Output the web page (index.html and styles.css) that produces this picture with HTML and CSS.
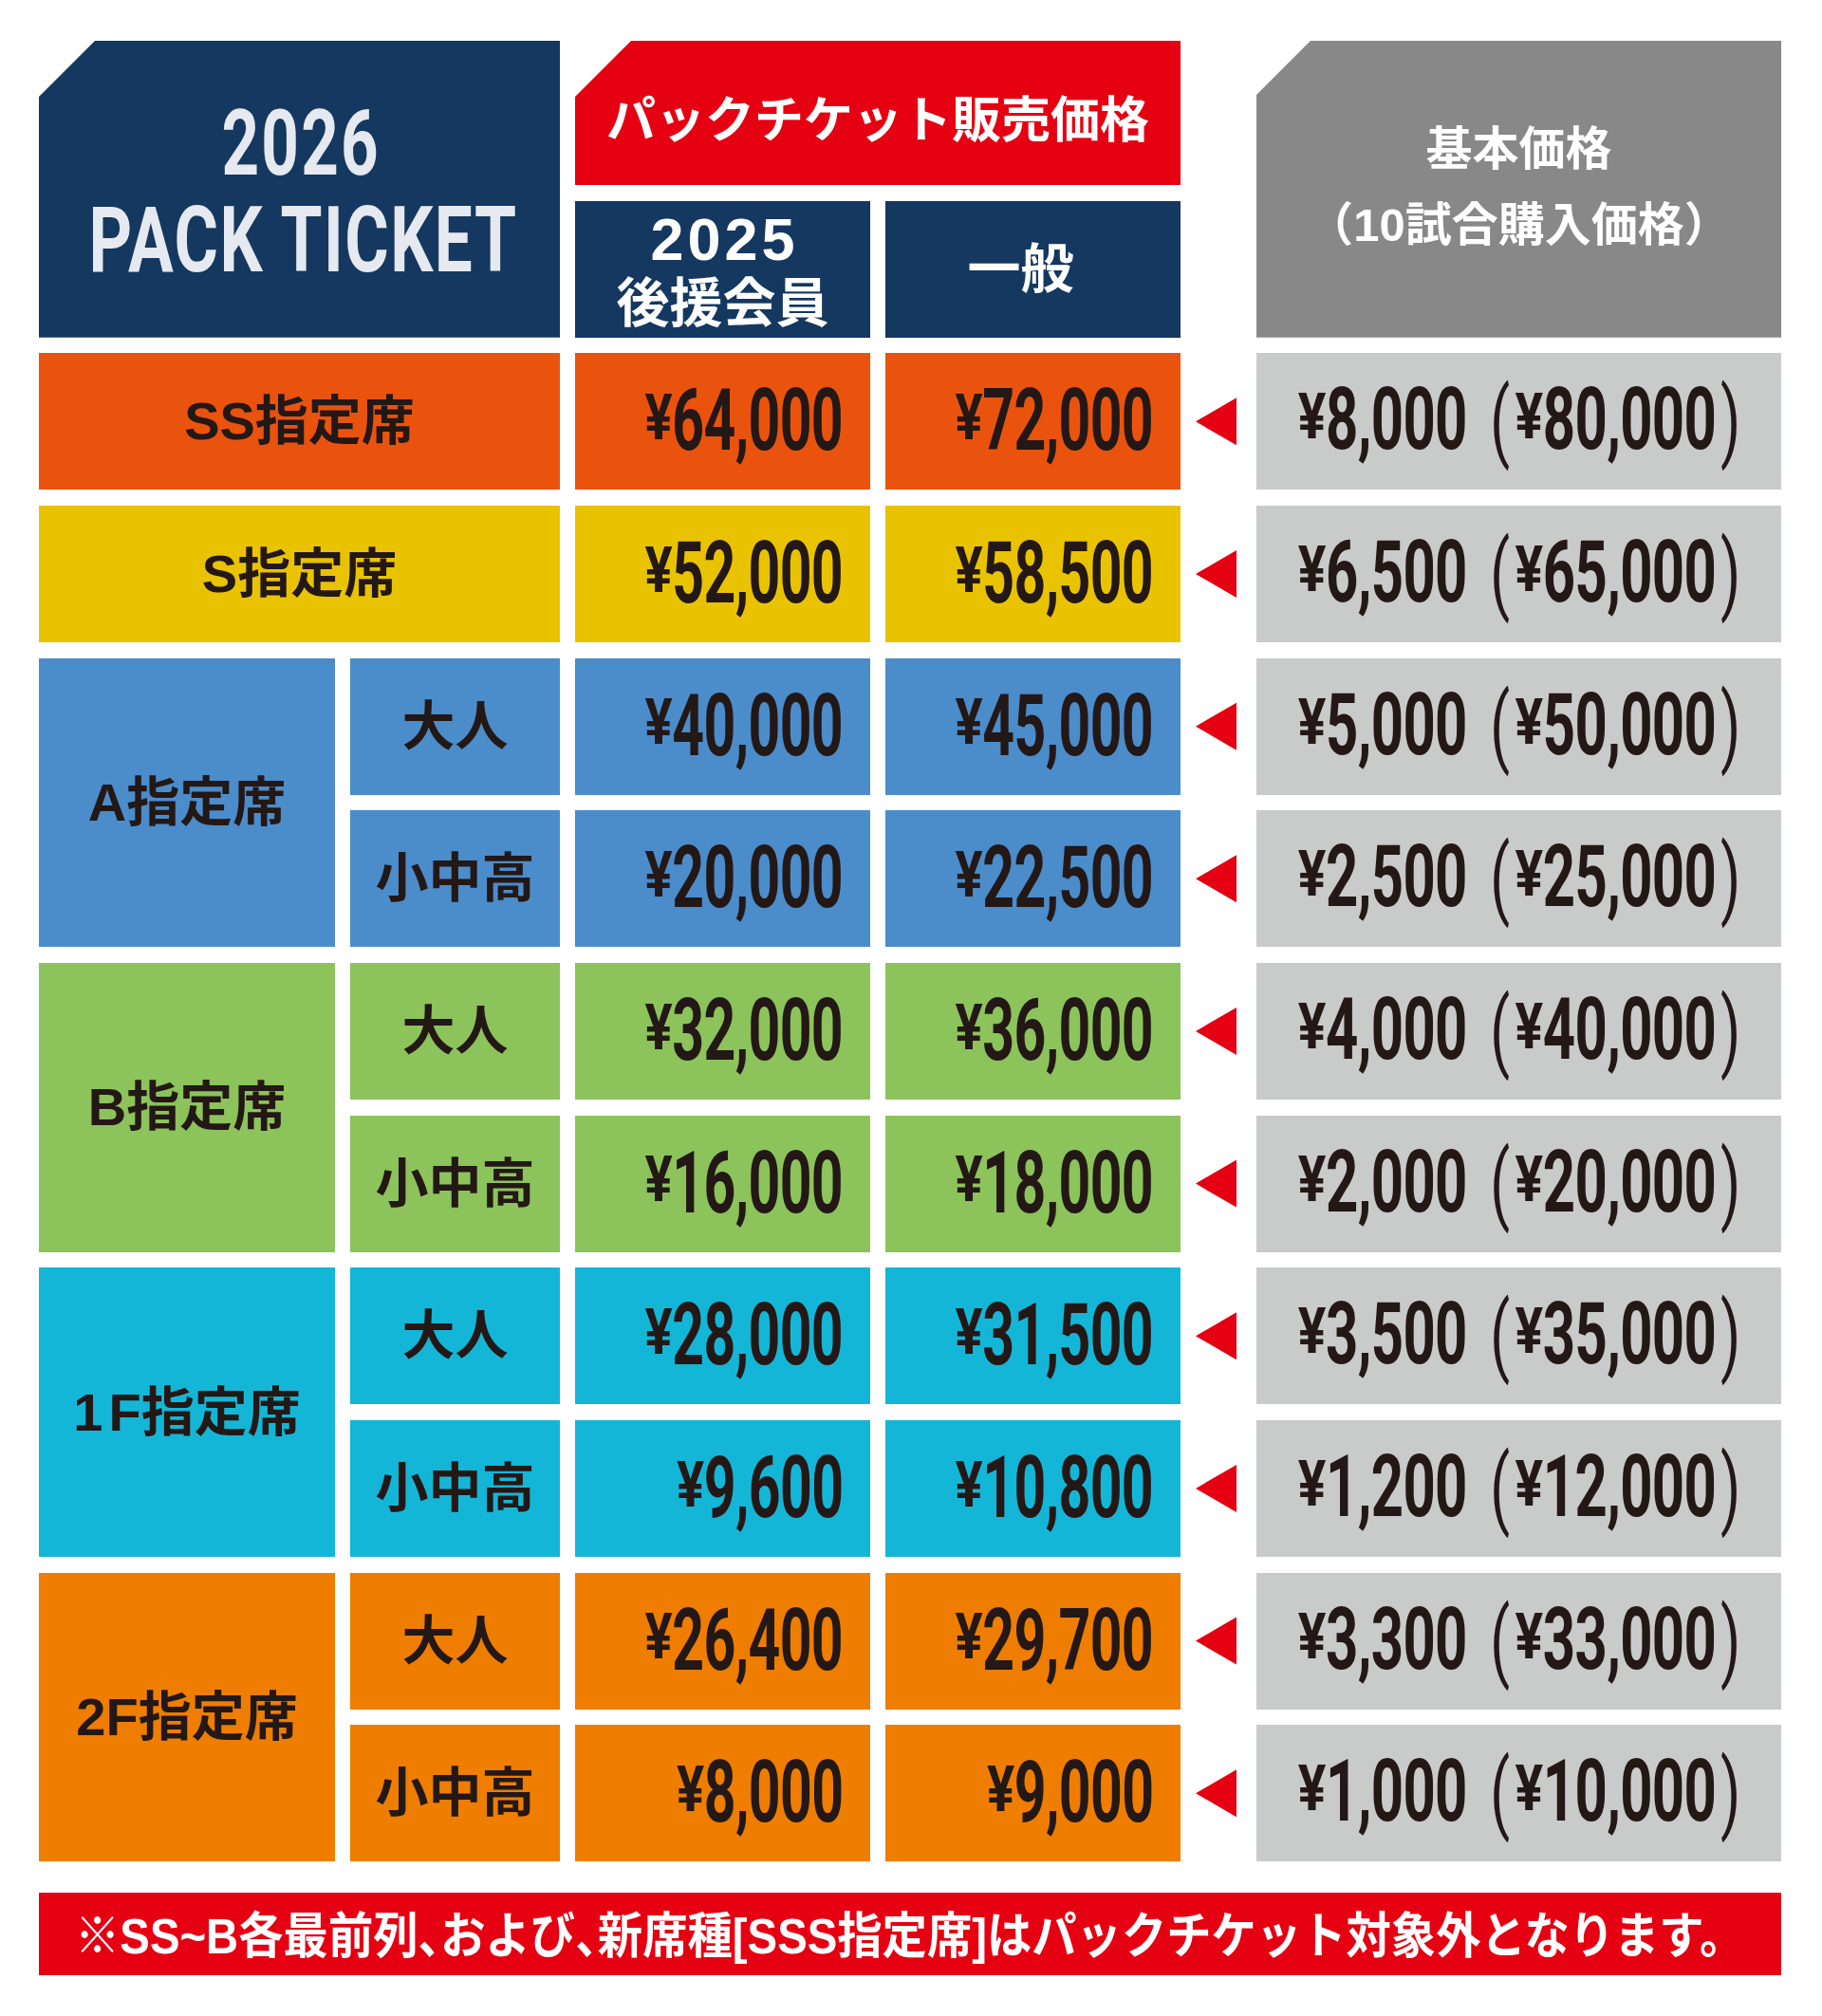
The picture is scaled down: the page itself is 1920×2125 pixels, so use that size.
FILE: index.html
```html
<!DOCTYPE html>
<html lang="ja">
<head>
<meta charset="utf-8">
<title>2026 PACK TICKET</title>
<link rel="stylesheet" href="styles.css">
</head>
<body>
<div class="page">
  <div class="table">
    <div class="cell title">
      <div class="title-year">2026</div>
      <div class="title-main">PACK TICKET</div>
    </div>
    <div class="cell pack-head">パックチケット販売価格</div>
    <div class="spacer"></div>
    <div class="cell base-head">
      <div>基本価格</div>
      <div>（10試合購入価格）</div>
    </div>
    <div class="cell sub-head">
      <div class="sub-year">2025</div>
      <div class="sub-label">後援会員</div>
    </div>
    <div class="cell sub-head"><div class="sub-label general">一般</div></div>
    <div class="spacer"></div>

    <!-- SS -->
    <div class="cell label wide ss">SS指定席</div>
    <div class="cell price ss"><span class="num"><span class="yen">¥</span>64,000</span></div>
    <div class="cell price ss"><span class="num"><span class="yen">¥</span>72,000</span></div>
    <div class="arrow"><span class="tri"></span></div>
    <div class="cell base"><span class="num"><span class="yen">¥</span>8,000<span class="paren open">(</span><span class="yen">¥</span>80,000<span class="paren close">)</span></span></div>

    <!-- S -->
    <div class="cell label wide s">S指定席</div>
    <div class="cell price s"><span class="num"><span class="yen">¥</span>52,000</span></div>
    <div class="cell price s"><span class="num"><span class="yen">¥</span>58,500</span></div>
    <div class="arrow"><span class="tri"></span></div>
    <div class="cell base"><span class="num"><span class="yen">¥</span>6,500<span class="paren open">(</span><span class="yen">¥</span>65,000<span class="paren close">)</span></span></div>

    <!-- A -->
    <div class="cell label tall a">A指定席</div>
    <div class="cell label a">大人</div>
    <div class="cell price a"><span class="num"><span class="yen">¥</span>40,000</span></div>
    <div class="cell price a"><span class="num"><span class="yen">¥</span>45,000</span></div>
    <div class="arrow"><span class="tri"></span></div>
    <div class="cell base"><span class="num"><span class="yen">¥</span>5,000<span class="paren open">(</span><span class="yen">¥</span>50,000<span class="paren close">)</span></span></div>
    <div class="cell label a">小中高</div>
    <div class="cell price a"><span class="num"><span class="yen">¥</span>20,000</span></div>
    <div class="cell price a"><span class="num"><span class="yen">¥</span>22,500</span></div>
    <div class="arrow"><span class="tri"></span></div>
    <div class="cell base"><span class="num"><span class="yen">¥</span>2,500<span class="paren open">(</span><span class="yen">¥</span>25,000<span class="paren close">)</span></span></div>

    <!-- B -->
    <div class="cell label tall b">B指定席</div>
    <div class="cell label b">大人</div>
    <div class="cell price b"><span class="num"><span class="yen">¥</span>32,000</span></div>
    <div class="cell price b"><span class="num"><span class="yen">¥</span>36,000</span></div>
    <div class="arrow"><span class="tri"></span></div>
    <div class="cell base"><span class="num"><span class="yen">¥</span>4,000<span class="paren open">(</span><span class="yen">¥</span>40,000<span class="paren close">)</span></span></div>
    <div class="cell label b">小中高</div>
    <div class="cell price b"><span class="num"><span class="yen">¥</span>16,000</span></div>
    <div class="cell price b"><span class="num"><span class="yen">¥</span>18,000</span></div>
    <div class="arrow"><span class="tri"></span></div>
    <div class="cell base"><span class="num"><span class="yen">¥</span>2,000<span class="paren open">(</span><span class="yen">¥</span>20,000<span class="paren close">)</span></span></div>

    <!-- 1F -->
    <div class="cell label tall f1"><span class="floor">1</span>F指定席</div>
    <div class="cell label f1">大人</div>
    <div class="cell price f1"><span class="num"><span class="yen">¥</span>28,000</span></div>
    <div class="cell price f1"><span class="num"><span class="yen">¥</span>31,500</span></div>
    <div class="arrow"><span class="tri"></span></div>
    <div class="cell base"><span class="num"><span class="yen">¥</span>3,500<span class="paren open">(</span><span class="yen">¥</span>35,000<span class="paren close">)</span></span></div>
    <div class="cell label f1">小中高</div>
    <div class="cell price f1"><span class="num"><span class="yen">¥</span>9,600</span></div>
    <div class="cell price f1"><span class="num"><span class="yen">¥</span>10,800</span></div>
    <div class="arrow"><span class="tri"></span></div>
    <div class="cell base"><span class="num"><span class="yen">¥</span>1,200<span class="paren open">(</span><span class="yen">¥</span>12,000<span class="paren close">)</span></span></div>

    <!-- 2F -->
    <div class="cell label tall f2">2F指定席</div>
    <div class="cell label f2">大人</div>
    <div class="cell price f2"><span class="num"><span class="yen">¥</span>26,400</span></div>
    <div class="cell price f2"><span class="num"><span class="yen">¥</span>29,700</span></div>
    <div class="arrow"><span class="tri"></span></div>
    <div class="cell base"><span class="num"><span class="yen">¥</span>3,300<span class="paren open">(</span><span class="yen">¥</span>33,000<span class="paren close">)</span></span></div>
    <div class="cell label f2">小中高</div>
    <div class="cell price f2"><span class="num"><span class="yen">¥</span>8,000</span></div>
    <div class="cell price f2"><span class="num"><span class="yen">¥</span>9,000</span></div>
    <div class="arrow"><span class="tri"></span></div>
    <div class="cell base"><span class="num"><span class="yen">¥</span>1,000<span class="paren open">(</span><span class="yen">¥</span>10,000<span class="paren close">)</span></span></div>
  </div>

  <div class="note"><span class="note-text">※SS~B各最前列<span class="punct">、</span>および<span class="punct">、</span>新席種[SSS指定席]はパックチケット対象外となります。</span></div>
</div>
</body>
</html>
```

FILE: styles.css
```css
html, body {
  margin: 0;
  padding: 0;
  background: #ffffff;
}

body {
  font-family: "Liberation Sans", "Noto Sans CJK JP", sans-serif;
  color: #231815;
}

.page {
  width: 1836px;
  padding: 43px 0 0 41px;
}

.table {
  display: grid;
  grid-template-columns: 312px 221px 311px 311px 48px 553px;
  grid-template-rows: 152px repeat(11, 144px);
  column-gap: 16px;
  row-gap: 16.67px;
}

.cell {
  display: flex;
  align-items: center;
  justify-content: center;
  overflow: hidden;
}

/* ---------- headers ---------- */
.title {
  grid-column: span 2;
  grid-row: span 2;
  flex-direction: column;
  background: #143860;
  color: #e6e9ef;
  font-family: "Roboto", "Liberation Sans", sans-serif;
  font-weight: 700;
  font-size: 96px;
  line-height: 102px;
  clip-path: polygon(59px 0, 100% 0, 100% 100%, 0 100%, 0 59px);
  padding-top: 6px;
  box-sizing: border-box;
}

.title-year {
  transform: scaleX(0.72);
  letter-spacing: 3px;
  margin-left: 4px;
}

.title-main {
  transform: scaleX(0.74);
  white-space: nowrap;
  letter-spacing: 2px;
  margin-left: 8px;
}

.pack-head {
  grid-column: span 2;
  background: #e50012;
  color: #ffffff;
  font-family: "Noto Sans CJK JP", sans-serif;
  font-weight: 700;
  font-size: 52px;
  line-height: 1;
  padding-top: 8px;
  box-sizing: border-box;
  clip-path: polygon(59px 0, 100% 0, 100% 100%, 0 100%, 0 59px);
  white-space: nowrap;
}

.base-head {
  grid-row: span 2;
  flex-direction: column;
  background: #888889;
  color: #ffffff;
  font-family: "Liberation Sans", "Noto Sans CJK JP", sans-serif;
  font-weight: 700;
  font-size: 49px;
  line-height: 80px;
  clip-path: polygon(57px 0, 100% 0, 100% 100%, 0 100%, 0 57px);
  padding-bottom: 4px;
  box-sizing: border-box;
  white-space: nowrap;
}

.sub-head {
  flex-direction: column;
  background: #143860;
  color: #ffffff;
  font-weight: 700;
  font-family: "Liberation Sans", "Noto Sans CJK JP", sans-serif;
}

.sub-year {
  font-size: 63px;
  line-height: 72px;
  letter-spacing: 4px;
  margin-left: 4px;
}

.sub-label {
  font-size: 56px;
  line-height: 64px;
}

.sub-label.general {
  margin-right: 26px;
}

.spacer {
  background: transparent;
}

/* ---------- body rows ---------- */
.label {
  font-family: "Liberation Sans", "Noto Sans CJK JP", sans-serif;
  font-weight: 700;
  font-size: 56px;
  line-height: 1;
  white-space: nowrap;
  color: #231815;
}

.label.wide {
  grid-column: span 2;
}

.label.tall {
  grid-row: span 2;
}

.floor {
  margin-right: 6px;
}

.price {
  justify-content: flex-end;
  padding-right: 29px;
}

.num {
  display: inline-block;
  font-family: "Roboto", "Liberation Sans", sans-serif;
  font-weight: 700;
  font-size: 90px;
  line-height: 1;
  color: #231815;
  white-space: nowrap;
  transform: scaleX(0.655);
  transform-origin: right center;
  letter-spacing: -1px;
}

.yen {
  display: inline-block;
  font-size: 0.74em;
  vertical-align: 0.17em;
  transform: scaleX(1.25);
  margin-right: 0.08em;
  margin-left: 0.1em;
}

.base .num {
  transform: scaleX(0.665);
  transform-origin: center center;
}

.paren {
  display: inline-block;
  font-family: "Roboto", "Liberation Sans", sans-serif;
  font-weight: 400;
  font-size: 1.02em;
  letter-spacing: 0;
  vertical-align: -0.02em;
}

.paren.open {
  margin-left: 0.4em;
  margin-right: 0.06em;
}

.paren.close {
  margin-left: 0.08em;
}

.base {
  background: #c9caca;
}

.ss { background: #e9530d; }
.s  { background: #e9c300; }
.a  { background: #4b8ccb; }
.b  { background: #8cc35b; }
.f1 { background: #14b6d7; }
.f2 { background: #ee7d00; }

.arrow {
  display: flex;
  align-items: center;
}

.tri {
  display: block;
  width: 43px;
  height: 50px;
  background: #e50012;
  clip-path: polygon(0 50%, 100% 0, 100% 100%);
}

/* ---------- note ---------- */
.note {
  margin-top: 33px;
  height: 87px;
  background: #e50012;
  display: flex;
  align-items: center;
  justify-content: center;
  overflow: hidden;
}

.note-text {
  display: inline-block;
  color: #ffffff;
  font-family: "Liberation Sans", "Noto Sans CJK JP", sans-serif;
  font-weight: 700;
  font-size: 52px;
  line-height: 1;
  white-space: nowrap;
  transform: scaleX(0.91);
  transform-origin: center center;
}

.punct {
  font-family: "Noto Sans CJK JP", sans-serif;
  font-feature-settings: "halt";
}
```
